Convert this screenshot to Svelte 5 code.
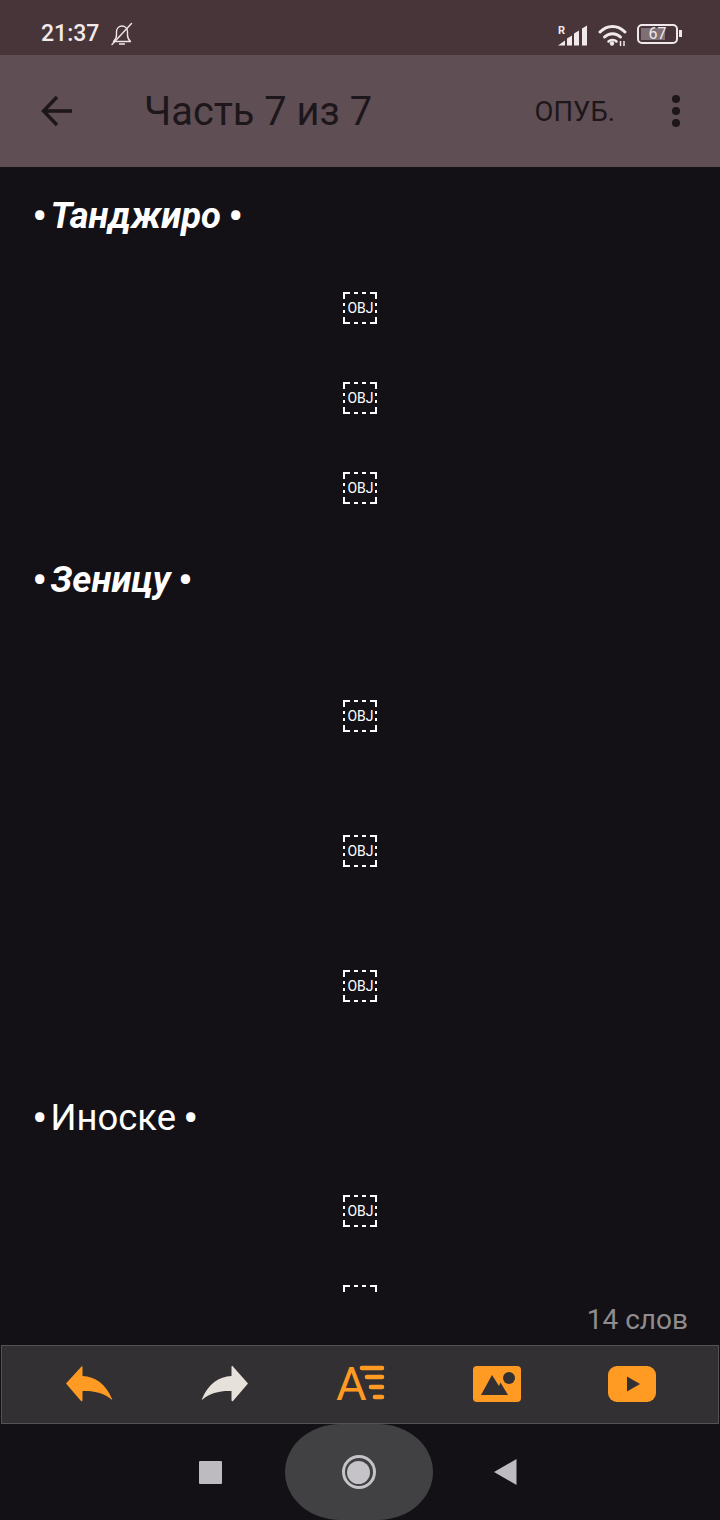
<script>
  const rows = [
    { type: "head", text: "Танджиро", bold: true, gap: "first" },
    { type: "obj", gap: "none" },
    { type: "obj", gap: "none" },
    { type: "obj", gap: "none" },
    { type: "head", text: "Зеницу", bold: true, gap: "none" },
    { type: "obj", gap: "short" },
    { type: "obj", gap: "one" },
    { type: "obj", gap: "one" },
    { type: "head", text: "Иноске", bold: false, gap: "tight" },
    { type: "obj", gap: "wide" },
    { type: "obj", gap: "none" },
  ];
</script>

<div class="screen">
  <div class="status">
    <div class="status-left">
      <span class="time">21:37</span>
      <svg class="bell" width="24" height="24" viewBox="0 0 24 24" fill="none" stroke="#efe6e8" stroke-width="1.4" stroke-linejoin="round" stroke-linecap="round">
        <path d="M3.5 19.5h17c-2-1.800-3-3.600-3-6.500V9.500c0-3-2.400-5.500-5.500-5.500S6.500 6.500 6.500 9.500V13c0 2.900-1 4.700-3 6.500z" />
        <path d="M9.500 22h5" />
        <path d="M2 22.500 21.500 1.500" />
      </svg>
    </div>
    <div class="status-right">
      <svg width="31" height="24" viewBox="0 0 31 24" fill="#f0e8ea">
        <text x="0" y="11.500" class="roam">R</text>
        <path d="M0 23.500l7-5v5zM9 23.500v-7l5-3v10zM16 23.500V11.500l5-3v15zM24 23.500V6.500l5-3v20z" />
      </svg>
      <svg width="30" height="24" viewBox="0 0 30 24" fill="none" stroke="#f0e8ea" stroke-width="3" stroke-linecap="round">
        <path d="M2 10c7-7.500 18-7.500 25 0" />
        <path d="M6.500 15c4.500-4.500 11.500-4.500 16 0" />
        <path d="M10.500 19.500c2-2 6-2 8 0" stroke-width="2.500" />
        <circle cx="14" cy="21.500" r="2.200" fill="#f0e8ea" stroke="none" />
        <path d="M22.500 19v5M26 19v5" stroke-width="1.500" stroke-linecap="butt" />
      </svg>
      <div class="battery">
        <div class="batt-body">
          <div class="batt-fill"></div>
          <span>67</span>
        </div>
        <div class="batt-tip"></div>
      </div>
    </div>
  </div>

  <div class="toolbar">
    <svg class="back" width="34" height="32" viewBox="0 0 34 32" fill="none" stroke="#1d161a" stroke-width="3.400">
      <path d="M32 16H4M17 2 3.500 16 17 30" />
    </svg>
    <div class="title">Часть 7 из 7</div>
    <div class="publish">ОПУБ.</div>
    <div class="dots"><i></i><i></i><i></i></div>
  </div>

  <div class="content">
    {#each rows as row}
      <div class="row gap-{row.gap}" class:is-head={row.type === "head"}>
        {#if row.type === "head"}
          <div class="head" class:bold={row.bold}>
            <span class="bullet">•</span>
            <span class="name">{row.text}</span>
            <span class="bullet">•</span>
          </div>
        {:else}
          <div class="obj">
            <svg width="36" height="34" viewBox="0 0 36 34" fill="none" stroke="#fff" stroke-width="2">
              <path d="M2 8V2h6M12 2h4M20 2h4M28 2h6v6M34 12v3M34 19v3M34 26v6h-6M24 32h-4M16 32h-4M8 32H2v-6M2 22v-3M2 15v-3" />
            </svg>
            <span>OBJ</span>
          </div>
        {/if}
      </div>
    {/each}
  </div>

  <div class="count">14 слов</div>

  <div class="tools">
    <svg width="48" height="38" viewBox="0 0 48 38" fill="#ff9b23">
      <path d="M16.500 1.500 1 18.500 16 36c1 .5 1.500 0 1.500-1V26c11-.5 22 2 29 8.500.8.700 1 .2.500-.5C41 19 30 11.500 17.500 11V2.500c0-1-.5-1.500-1-1z" />
    </svg>
    <svg width="48" height="38" viewBox="0 0 48 38" fill="#e6e1da">
      <path d="M31.500 1 47 18.500 32 36c-1 .5-1.500 0-1.500-1V26c-11-.5-22 2-29 8.500-.8.700-1 .2-.5-.5C7 19 18 11.500 30.500 11V2c0-1 .5-1.500 1-1z" />
    </svg>
    <svg width="50" height="38" viewBox="0 0 50 38" fill="none">
      <text x="0" y="35" class="font-a">A</text>
      <g stroke="#ff9b23" stroke-width="4.600" stroke-linecap="round">
        <path d="M26 3h20M31 12h15M35 22h11M39 32h7" />
      </g>
    </svg>
    <svg class="picture" width="48" height="38" viewBox="0 0 48 38">
      <rect x="0" y="1" width="48" height="36" rx="4" fill="#ff9b23" />
      <path d="M8 30 19 10l7 11 1.500-3.500L35 30z" fill="#333033" />
      <circle cx="36" cy="13" r="6" fill="#333033" />
    </svg>
    <svg width="48" height="38" viewBox="0 0 48 38">
      <rect x="0" y="1" width="48" height="36" rx="9" fill="#ff9b23" />
      <path d="M19 11.500 32 19l-13 7.500z" fill="#333033" />
    </svg>
  </div>

  <div class="nav">
    <div class="nav-square"></div>
    <div class="nav-home"><div class="nav-ring"><div class="nav-dot"></div></div></div>
    <svg class="nav-back" width="26" height="28" viewBox="0 0 26 28"><path d="M1 14 23.500 1v26z" fill="#bdbbbf" /></svg>
  </div>
</div>

<style>
  :global(body) {
    margin: 0;
    background: #131115;
  }

  .screen {
    width: 720px;
    height: 1520px;
    display: flex;
    flex-direction: column;
    background: #131115;
    font-family: Roboto, sans-serif;
    overflow: hidden;
  }

  .status {
    height: 55px;
    flex: none;
    background: #47353a;
    display: flex;
    justify-content: space-between;
    align-items: center;
    padding: 12px 38px 0 41px;
    box-sizing: border-box;
  }

  .status-left {
    display: flex;
    align-items: center;
    gap: 11px;
  }

  .time {
    color: #f3eaec;
    font-size: 23px;
    font-weight: 500;
  }

  .status-right {
    display: flex;
    align-items: center;
    gap: 9px;
  }

  .roam {
    font: 700 11px Roboto, sans-serif;
  }

  .battery {
    display: flex;
    align-items: center;
    gap: 1px;
  }

  .batt-body {
    position: relative;
    width: 41px;
    height: 20px;
    box-sizing: border-box;
    border: 2px solid #f0e8ea;
    border-radius: 5px;
    display: flex;
    align-items: center;
    justify-content: center;
    color: #f0e8ea;
    font-size: 16px;
  }

  .batt-body span {
    position: relative;
  }

  .batt-fill {
    position: absolute;
    left: 2px;
    top: 2px;
    bottom: 2px;
    width: 24px;
    background: #7d6f73;
  }

  .batt-tip {
    width: 3px;
    height: 7px;
    background: #f0e8ea;
  }

  .toolbar {
    height: 112px;
    flex: none;
    background: #5f4e53;
    display: flex;
    align-items: center;
    padding: 0 40px 0 40px;
    box-sizing: border-box;
  }

  .back {
    flex: none;
  }

  .title {
    margin-left: 70px;
    font-size: 39.800px;
    color: #1d161a;
    flex: 1;
  }

  .publish {
    font-size: 27.500px;
    color: #1d161a;
    margin-right: 57px;
  }

  .dots {
    display: flex;
    flex-direction: column;
    gap: 4px;
  }

  .dots i {
    display: block;
    width: 8px;
    height: 8px;
    border-radius: 50%;
    background: #1d161a;
  }

  .content {
    flex: 1;
    min-height: 0;
    overflow: hidden;
    padding: 0 32px;
  }

  .row {
    height: 45px;
    display: flex;
    align-items: center;
  }

  .row.is-head {
    height: 49px;
  }

  .gap-first {
    margin-top: 24px;
  }

  .gap-none {
    margin-top: 45px;
  }

  .gap-one {
    margin-top: 90px;
  }

  .gap-short {
    margin-top: 89px;
  }

  .gap-tight {
    margin-top: 85px;
  }

  .gap-wide {
    margin-top: 46px;
  }

  .head {
    display: flex;
    align-items: center;
    gap: 3px;
    color: #fff;
    font-size: 36.400px;
    white-space: nowrap;
  }

  .head.bold {
    font-weight: 700;
    font-style: italic;
  }

  .name {
    margin-right: 4px;
  }

  .bullet {
    font-size: 46px;
    font-style: normal;
    font-weight: 400;
    line-height: 1;
  }

  .obj {
    position: relative;
    width: 36px;
    height: 34px;
    margin-left: 310px;
    display: flex;
    align-items: center;
    justify-content: center;
  }

  .obj svg {
    position: absolute;
    inset: 0;
  }

  .obj span {
    color: #fff;
    font-size: 14px;
    padding-left: 1px;
  }

  .count {
    height: 50px;
    flex: none;
    box-sizing: border-box;
    padding: 8px 32px 0 0;
    text-align: right;
    color: #8e8c8f;
    font-size: 28px;
  }

  .tools {
    height: 79px;
    flex: none;
    box-sizing: border-box;
    margin: 0 1px;
    background: #333033;
    border: 1px solid #555256;
    display: flex;
    align-items: center;
    justify-content: space-between;
    padding: 0 62px 2px 63px;
  }

  .picture {
    margin-left: -1px;
  }

  .nav {
    height: 96px;
    flex: none;
    display: flex;
    align-items: center;
    justify-content: center;
    gap: 62px;
    padding-right: 3px;
  }

  .nav-square {
    width: 23px;
    height: 23px;
    border-radius: 1px;
    background: #bdbbbf;
  }

  .nav-home {
    width: 148px;
    height: 96px;
    border-radius: 55px / 48px;
    background: #414043;
    display: flex;
    align-items: center;
    justify-content: center;
    margin-left: 1px;
  }

  .nav-ring {
    width: 34px;
    height: 34px;
    box-sizing: border-box;
    border: 3px solid #c5c3c7;
    border-radius: 50%;
    display: flex;
    align-items: center;
    justify-content: center;
  }

  .nav-dot {
    width: 23px;
    height: 23px;
    border-radius: 50%;
    background: #c5c3c7;
  }

  .nav-back {
    margin-left: -2px;
  }

  .font-a {
    font: 400 47px Roboto, sans-serif;
    fill: #ff9b23;
  }
</style>
